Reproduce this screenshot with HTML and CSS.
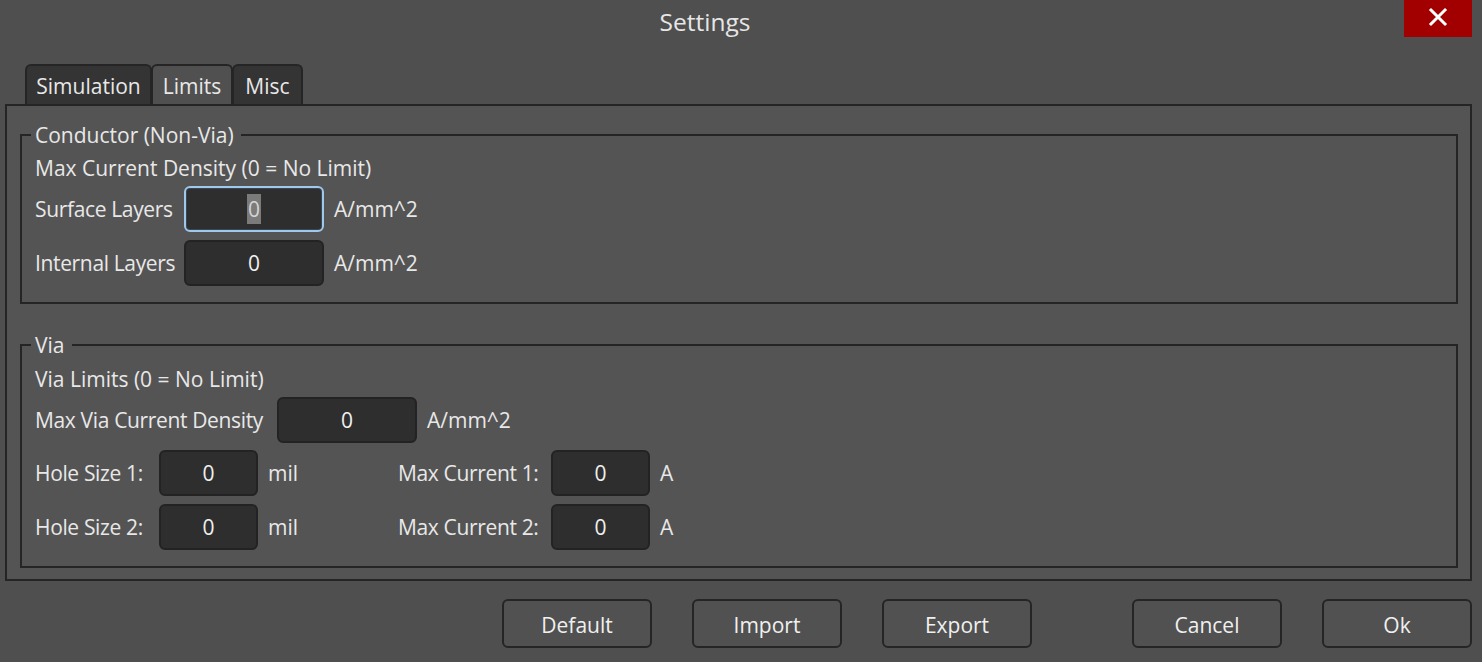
FILE: index.html
```html
<!DOCTYPE html>
<html>
<head>
<meta charset="utf-8">
<link rel="stylesheet" href="styles.css">
</head>
<body>
<div class="window">
  <div class="titlebar">
    <div class="title">Settings</div>
    <button class="close" aria-label="Close">
      <svg width="20" height="20" viewBox="0 0 20 20"><path d="M3 3 L17 17 M17 3 L3 17" stroke="#fff" stroke-width="3" stroke-linecap="square"/></svg>
    </button>
  </div>
  <div class="tabs">
    <div class="tab t-sim">Simulation</div>
    <div class="tab t-lim active">Limits</div>
    <div class="tab t-misc">Misc</div>
  </div>
  <div class="panel">
    <fieldset class="group g1">
      <legend>Conductor (Non-Via)</legend>
      <div class="note n1">Max Current Density (0 = No Limit)</div>
      <div class="cgrid">
        <span class="lbl">Surface Layers</span>
        <div class="field w140 focus"><span class="sel">0</span></div>
        <span class="unit">A/mm^2</span>
        <span class="lbl">Internal Layers</span>
        <div class="field w140">0</div>
        <span class="unit">A/mm^2</span>
      </div>
    </fieldset>
    <fieldset class="group g2">
      <legend>Via</legend>
      <div class="note n2">Via Limits (0 = No Limit)</div>
      <div class="vrow">
        <span class="lbl">Max Via Current Density</span>
        <div class="field w140">0</div>
        <span class="unit">A/mm^2</span>
      </div>
      <div class="hgrid">
        <span class="lbl">Hole Size 1:</span>
        <div class="field w99">0</div>
        <span class="unit">mil</span>
        <span class="lbl">Max Current 1:</span>
        <div class="field w99">0</div>
        <span class="unit">A</span>
        <span class="lbl">Hole Size 2:</span>
        <div class="field w99">0</div>
        <span class="unit">mil</span>
        <span class="lbl">Max Current 2:</span>
        <div class="field w99">0</div>
        <span class="unit">A</span>
      </div>
    </fieldset>
  </div>
  <div class="buttons">
    <button class="btn">Default</button>
    <button class="btn">Import</button>
    <button class="btn">Export</button>
    <button class="btn push">Cancel</button>
    <button class="btn">Ok</button>
  </div>
</div>
</body>
</html>
```
FILE: styles.css
```css
* { box-sizing: border-box; }
html, body {
  margin: 0;
  padding: 0;
  background: #4f4f4f;
  width: 1482px;
  height: 662px;
  overflow: hidden;
}
body {
  font-family: "Open Sans", "Noto Sans", "Liberation Sans", sans-serif;
  font-size: 21px;
  color: #e8e8e8;
}
.window {
  display: flex;
  flex-direction: column;
  height: 662px;
}
.titlebar {
  display: flex;
  align-items: flex-start;
  height: 64px;
}
.title {
  flex: 1;
  text-align: center;
  font-size: 24.5px;
  line-height: 44px;
  color: #e6e6e6;
  padding-left: 6px;
}
.close {
  margin-right: 10px;
  width: 68px;
  height: 37px;
  background: #a20000;
  border: none;
  padding: 0;
  display: flex;
  align-items: center;
  justify-content: center;
}
.close svg { margin-top: -4px; }
.tabs {
  display: flex;
  padding-left: 25px;
  height: 40px;
}
.tab {
  border: 2px solid #252525;
  border-bottom: none;
  border-radius: 6px 6px 0 0;
  background: #343434;
  text-align: center;
  line-height: 40px;
  height: 40px;
  white-space: nowrap;
}
.t-sim { width: 127px; }
.t-misc { width: 71px; }
.tab.active {
  background: #505050;
  margin-left: -1px;
  width: 82px;
  margin-right: -1px;
}
.panel {
  margin: 0 10px 0 5px;
  height: 477px;
  border: 2px solid #252525;
  background: #545454;
  padding: 15px 12px 0 13px;
  display: flex;
  flex-direction: column;
}
.group {
  border: 2px solid #252525;
  margin: 0;
  padding: 0 0 0 13px;
  min-width: 0;
}
.group legend {
  padding: 0 7px 0 4px;
  margin-left: -4px;
  line-height: 28px;
}
.g1 { height: 183px; }
.g2 { height: 237px; margin-top: 27px; }
.note {
  line-height: 26px;
  white-space: nowrap;
}
.n1 { margin-top: 6px; }
.n2 { margin-top: 7px; }
.lbl, .unit {
  white-space: nowrap;
}
.lbl { letter-spacing: -0.35px; }
.field {
  height: 46px;
  border: 2px solid #232323;
  border-radius: 6px;
  background: #2e2e2e;
  display: flex;
  align-items: center;
  justify-content: center;
  color: #f0f0f0;
}
.w140 { width: 140px; }
.w99 { width: 99px; }
.field.focus {
  border-color: #9fc8ec;
  box-shadow: inset 0 0 0 1px #3a4652;
}
.sel {
  background: #7b7b7b;
  color: #d4d4d4;
  line-height: 30px;
  padding: 0 1px;
}
.cgrid {
  display: grid;
  grid-template-columns: 139px 140px auto;
  column-gap: 10px;
  row-gap: 8px;
  align-items: center;
  margin-top: 5px;
}
.vrow {
  display: grid;
  grid-template-columns: 232px 140px auto;
  column-gap: 10px;
  align-items: center;
  margin-top: 5px;
}
.hgrid {
  display: grid;
  grid-template-columns: 114px 99px 120px 143px 99px auto;
  column-gap: 10px;
  row-gap: 8px;
  align-items: center;
  margin-top: 7px;
}
.buttons {
  display: flex;
  padding: 18px 10px 0 502px;
  gap: 40px;
}
.btn {
  width: 150px;
  height: 49px;
  border: 2px solid #252525;
  border-radius: 6px;
  background: #515151;
  color: #f0f0f0;
  font-family: "Open Sans", "Noto Sans", "Liberation Sans", sans-serif;
  font-size: 21px;
  padding: 3px 0 0 0;
}
.btn.push { margin-left: 60px; }
```
